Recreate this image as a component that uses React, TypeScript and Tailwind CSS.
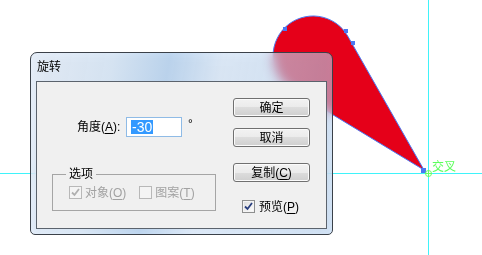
import React from "react";

const font = "font-['Liberation_Sans','Noto_Sans_CJK_SC',sans-serif]";

const Key = ({ k }: { k: string }) => <span className="underline underline-offset-2">{k}</span>;

const Check = ({ checked, disabled }: { checked?: boolean; disabled?: boolean }) => (
  <span
    className={
      disabled
        ? "flex h-[13px] w-[13px] items-center justify-center border border-[#b8b8b8] bg-[#f4f4f4]"
        : "flex h-[13px] w-[13px] items-center justify-center border border-[#8e8f8f] bg-[linear-gradient(135deg,#dcdcdc,#ffffff)] shadow-[inset_0_0_0_1px_#f4f4f4]"
    }
  >
    {checked && (
      <svg width="9" height="9" viewBox="0 0 9 9">
        <path
          d="M1 4.5 L3.5 7 L8 1"
          fill="none"
          stroke={disabled ? "#b0b0b0" : "#2a3f7e"}
          strokeWidth="1.8"
        />
      </svg>
    )}
  </span>
);

const Button = ({ children }: { children: React.ReactNode }) => (
  <button className="flex h-[19px] w-[77px] items-center justify-center rounded-[3px] border border-[#707070] bg-[linear-gradient(#f2f2f2,#ebebeb_50%,#dddddd_50%,#cfcfcf)] text-[12px] leading-none text-black shadow-[inset_0_0_0_1px_#fbfbfb]">
    {children}
  </button>
);

const Artwork = () => (
  <svg className="absolute inset-0" width="482" height="255">
    <line x1="0" y1="173.5" x2="482" y2="173.5" stroke="#3ff3fa" strokeWidth="1" />
    <line x1="428.5" y1="0" x2="428.5" y2="255" stroke="#3ff3fa" strokeWidth="1" />
    <path
      d="M424 170 L292.3 90.2 A40 40 0 1 1 347.8 36.2 Z"
      fill="#e50019"
      stroke="#4a78f2"
      strokeWidth="1"
    />
    <rect x="283" y="27" width="4" height="4" fill="#4a78f2" />
    <rect x="344" y="29" width="4" height="4" fill="#4a78f2" />
    <rect x="351" y="41" width="4" height="4" fill="#4a78f2" />
    <rect x="421" y="168" width="5" height="5" fill="#4a78f2" />
    <circle cx="428.5" cy="173.5" r="3" fill="none" stroke="#66ff66" strokeWidth="1" />
    <line x1="425" y1="173.5" x2="432" y2="173.5" stroke="#66ff66" />
    <line x1="428.5" y1="170" x2="428.5" y2="177" stroke="#66ff66" />
  </svg>
);

export default function App() {
  return (
    <div className={`relative h-[255px] w-[482px] overflow-hidden bg-white ${font}`}>
      <Artwork />
      <span className="absolute left-[432px] top-[159px] text-[12px] leading-[16px] text-[#5cff5c]">交叉</span>

      {/* Aero glass dialog */}
      <div className="absolute left-[30px] top-[52px] flex h-[183px] w-[303px] flex-col rounded-t-[7px] rounded-b-[5px] border border-[#3b4149] bg-[linear-gradient(100deg,rgba(225,238,255,0.62)_0%,rgba(205,228,252,0.6)_25%,rgba(160,200,242,0.6)_42%,rgba(212,232,255,0.62)_58%,rgba(185,216,250,0.55)_100%)] px-[5px] pb-[5px] backdrop-blur-[6px] backdrop-brightness-[0.88]">
        <div className="flex h-[28px] items-center pl-[1px] text-[12px] text-black">旋转</div>

        <div className="flex flex-1 border border-[#5b636d] bg-[#f0f0f0] text-[12px] text-black">
          <div className="flex w-[196px] flex-col pt-[35px]">
            <div className="flex h-[20px] items-center pl-[40px]">
              <span className="w-[49px] leading-none">
                角度(<Key k="A" />):
              </span>
              <span className="flex h-[20px] w-[56px] items-center border border-[#8fbbe6] bg-white pl-[4px]">
                <span className="bg-[#3399ff] px-[1px] text-[14px] leading-[14px] text-white">-30</span>
              </span>
              <span className="ml-[6px] -mt-[6px] text-[12px] leading-none">°</span>
            </div>

            <fieldset className="mt-[29px] ml-[15px] h-[45px] w-[164px] border border-[#a5a5a5] px-[16px]">
              <legend className="ml-[-3px] px-[3px] text-[12px] leading-[16px] text-black">选项</legend>
              <div className="mt-[4px] flex items-center text-[#a2a2a2]">
                <Check checked disabled />
                <span className="ml-[3px] leading-none">
                  对象(<Key k="O" />)
                </span>
                <span className="ml-[13px]">
                  <Check disabled />
                </span>
                <span className="ml-[3px] leading-none">
                  图案(<Key k="T" />)
                </span>
              </div>
            </fieldset>
          </div>

          <div className="flex flex-col pt-[16px]">
            <Button>确定</Button>
            <div className="mt-[11px]">
              <Button>取消</Button>
            </div>
            <div className="mt-[16px]">
              <Button>
                复制(<Key k="C" />)
              </Button>
            </div>
            <div className="mt-[18px] flex items-center pl-[9px]">
              <Check checked />
              <span className="ml-[4px] leading-none">
                预览(<Key k="P" />)
              </span>
            </div>
          </div>
        </div>
      </div>
    </div>
  );
}
